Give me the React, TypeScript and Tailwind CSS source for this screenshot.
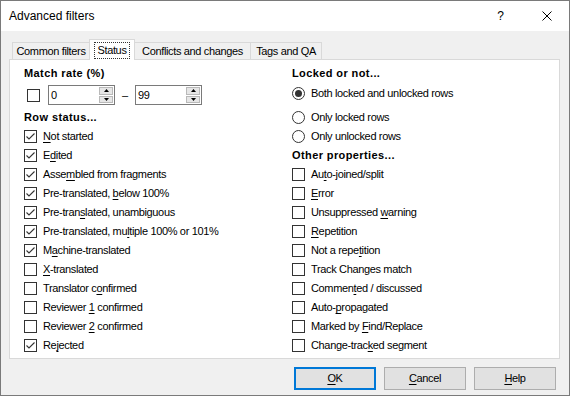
import React from "react"

function Mn({ text }: { text: string }) {
  const i = text.indexOf("&")
  if (i < 0) return <span>{text}</span>
  return (
    <span>
      {text.slice(0, i)}
      <span className="underline decoration-1 underline-offset-[2px]">{text[i + 1]}</span>
      {text.slice(i + 2)}
    </span>
  )
}

function Box({ checked }: { checked?: boolean }) {
  return (
    <span className="w-[13px] h-[13px] border border-[#333333] bg-white shrink-0 flex items-center justify-center">
      {checked && (
        <svg width="11" height="11" viewBox="0 0 11 11">
          <path d="M1.5 5.5 L4 8 L9.5 2.5" stroke="#333" fill="none" strokeWidth="1.1" />
        </svg>
      )}
    </span>
  )
}

function Radio({ on }: { on?: boolean }) {
  return (
    <span className="w-[13px] h-[13px] rounded-full border border-[#333333] bg-white shrink-0 flex items-center justify-center">
      {on && <span className="w-[7px] h-[7px] rounded-full bg-[#333333]" />}
    </span>
  )
}

function CheckRow({ label, checked }: { label: string; checked?: boolean }) {
  return (
    <div className="h-[19px] flex items-center">
      <Box checked={checked} />
      <span className="ml-[6px]">
        <Mn text={label} />
      </span>
    </div>
  )
}

function RadioRow({ label, on, className = "" }: { label: string; on?: boolean; className?: string }) {
  return (
    <div className={"h-[19px] flex items-center " + className}>
      <Radio on={on} />
      <span className="ml-[6px]">{label}</span>
    </div>
  )
}

function Spin({ value }: { value: string }) {
  return (
    <div className="w-[67px] h-[20px] border border-[#7a7a7a] bg-white flex">
      <span className="flex-1 pl-[2px] flex items-center">{value}</span>
      <div className="w-[15px] flex flex-col gap-[1px] py-[1px] pr-[1px]">
        <div className="flex-1 bg-[#e6e6e6] border border-[#b9b9b9] flex items-center justify-center">
          <svg width="5" height="3" viewBox="0 0 5 3"><path d="M0 3 L2.5 0 L5 3 Z" fill="#000" /></svg>
        </div>
        <div className="flex-1 bg-[#e6e6e6] border border-[#b9b9b9] flex items-center justify-center">
          <svg width="5" height="3" viewBox="0 0 5 3"><path d="M0 0 L2.5 3 L5 0 Z" fill="#000" /></svg>
        </div>
      </div>
    </div>
  )
}

const rowStatus = [
  { label: "&Not started", checked: true },
  { label: "E&dited", checked: true },
  { label: "Asse&mbled from fragments", checked: true },
  { label: "Pre-translated, &below 100%", checked: true },
  { label: "Pre-tran&slated, unambiguous", checked: true },
  { label: "Pre-translated, mu&ltiple 100% or 101%", checked: true },
  { label: "M&achine-translated", checked: true },
  { label: "&X-translated", checked: false },
  { label: "Translator c&onfirmed", checked: false },
  { label: "Reviewer &1 confirmed", checked: false },
  { label: "Reviewer &2 confirmed", checked: false },
  { label: "Re&jected", checked: true },
]

const otherProps = [
  "Au&to-joined/split",
  "&Error",
  "Unsuppressed &warning",
  "&Repetition",
  "Not a repe&tition",
  "Track Changes match",
  "Commen&ted / discussed",
  "Auto-&propagated",
  "Marked by &Find/Replace",
  "Change-trac&ked segment",
]

export default function App() {
  return (
    <div className="w-[570px] h-[396px] border border-[#7a7a7a] flex flex-col bg-[#f0f0f0] text-black font-['Liberation_Sans',Arial,sans-serif]">
      <div className="h-[30px] bg-white flex items-center shrink-0 text-[12px]">
        <span className="ml-[8px] flex-1">Advanced filters</span>
        <span className="text-[12px]">?</span>
        <svg className="ml-[38px] mr-[17px]" width="10" height="10" viewBox="0 0 10 10">
          <path d="M0.5 0.5 L9.5 9.5 M9.5 0.5 L0.5 9.5" stroke="#000" strokeWidth="1" fill="none" />
        </svg>
      </div>

      <div className="flex-1 flex flex-col pt-[8px] text-[11px] leading-[13px] tracking-[-0.35px]">
        <div className="h-[20px] flex items-end pl-[11px]">
          <div className="w-[77px] h-[17px] border border-r-0 border-b-0 border-[#d9d9d9] flex items-center justify-center">
            Common filters
          </div>
          <div className="w-[46px] h-[21px] -mb-px relative z-10 bg-white border border-b-0 border-[#d9d9d9] flex items-center justify-center">
            <span className="px-[1px] outline-1 outline-dotted outline-[#333] outline-offset-[1px]">Status</span>
          </div>
          <div className="w-[116px] h-[17px] border border-l-0 border-b-0 border-[#d9d9d9] flex items-center justify-center">
            Conflicts and changes
          </div>
          <div className="w-[71px] h-[17px] border border-l-0 border-b-0 border-[#d9d9d9] flex items-center justify-center">
            Tags and QA
          </div>
        </div>

        <div className="ml-[8px] w-[551px] h-[300px] border border-[#d9d9d9] bg-white flex pt-[4px] pl-[14px]">
          <div className="w-[268px] flex flex-col">
            <div className="h-[19px] flex items-center font-bold tracking-[0.4px]">Match rate (%)</div>
            <div className="h-[20px] mt-[2px] flex items-center">
              <span className="ml-[3px]"><Box /></span>
              <span className="ml-[8px]"><Spin value="0" /></span>
              <span className="w-[20px] text-center">–</span>
              <Spin value="99" />
            </div>
            <div className="h-[19px] mt-[3px] flex items-center font-bold tracking-[0.4px]">Row status...</div>
            {rowStatus.map((r) => (
              <CheckRow key={r.label} label={r.label} checked={r.checked} />
            ))}
          </div>

          <div className="flex flex-col">
            <div className="h-[19px] flex items-center font-bold tracking-[0.4px]">Locked or not...</div>
            <RadioRow className="mt-[1px]" label="Both locked and unlocked rows" on />
            <RadioRow className="mt-[5px]" label="Only locked rows" />
            <RadioRow label="Only unlocked rows" />
            <div className="h-[19px] flex items-center font-bold tracking-[0.4px]">Other properties...</div>
            {otherProps.map((l) => (
              <CheckRow key={l} label={l} />
            ))}
          </div>
        </div>

        <div className="mt-[8px] flex justify-end gap-[8px] pr-[13px]">
          <button className="w-[82px] h-[23px] bg-[#e1e1e1] border-2 border-[#0078d7] flex items-center justify-center">
            <Mn text="&OK" />
          </button>
          <button className="w-[82px] h-[23px] bg-[#e1e1e1] border border-[#adadad] flex items-center justify-center">
            <Mn text="&Cancel" />
          </button>
          <button className="w-[82px] h-[23px] bg-[#e1e1e1] border border-[#adadad] flex items-center justify-center">
            <Mn text="&Help" />
          </button>
        </div>
      </div>
    </div>
  )
}
